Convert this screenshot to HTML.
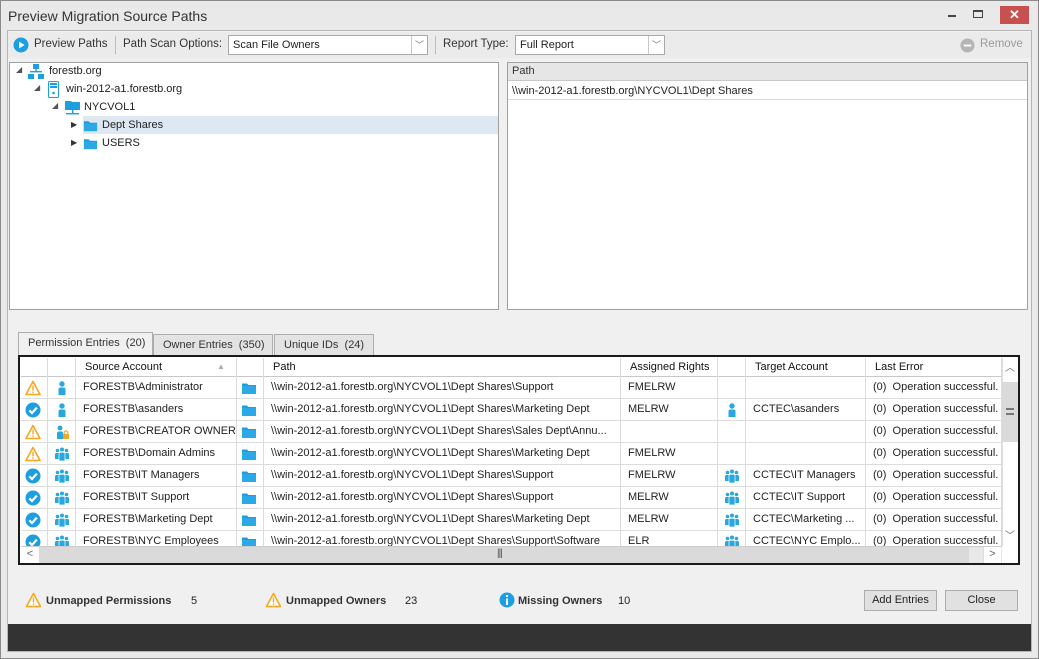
<!DOCTYPE html>
<html><head><meta charset="utf-8">
<style>
*{box-sizing:border-box;margin:0;padding:0}
body{width:1039px;height:659px;overflow:hidden;background:#fff;font-family:"Liberation Sans",sans-serif;font-size:11px;color:#222;position:relative}
.a{position:absolute}
.win{left:0;top:0;width:1039px;height:659px;border:1px solid #8a8a8a;background:#e9e9e9}
.body{left:7px;top:30px;width:1025px;height:622px;background:#f0f0f0;border:1px solid #b5b5b5}
.t{white-space:nowrap}
.combo{background:#fff;border:1px solid #a9a9a9;height:20px}
.combo .arr{position:absolute;right:0;top:0;width:16px;height:18px;border-left:1px solid #c8c8c8;color:#777;font-size:9px;text-align:center;line-height:18px}
.panel{background:#fff;border:1px solid #a0a0a0}
.tab{border:1px solid #adadad;border-bottom:none;background:#e3e3e3;height:22px;line-height:21px;padding-left:9px;color:#333;white-space:nowrap}
.grid{left:18px;top:355px;width:1002px;height:210px;border:2px solid #1a1a1a;background:#fff}
.row{position:absolute;left:0;width:981px;height:22px;border-bottom:1px solid #dcdcdc}
.c{position:absolute;top:0;height:22px;line-height:21px;border-right:1px solid #dcdcdc;white-space:nowrap;overflow:hidden;padding-left:7px}
.hd .c{height:19px;line-height:18px;padding-left:9px;color:#111}
.btn{background:#e1e1e1;border:1px solid #adadad;height:21px;line-height:19px;text-align:center;color:#222}
</style></head><body>
<svg width="0" height="0" style="position:absolute">
<defs>
<symbol id="warn" viewBox="0 0 16 16"><path d="M8 1.5L15 14.5H1Z" fill="#fff" stroke="#f5a623" stroke-width="1.6" stroke-linejoin="round"/><rect x="7.3" y="5.5" width="1.4" height="5" fill="#f5a623"/><rect x="7.3" y="11.5" width="1.4" height="1.4" fill="#f5a623"/></symbol>
<symbol id="ok" viewBox="0 0 16 16"><circle cx="8" cy="8" r="7.5" fill="#1c9ee0"/><path d="M4.3 8.3L7 11L11.8 5.6" fill="none" stroke="#fff" stroke-width="2.2"/></symbol>
<symbol id="user" viewBox="0 0 16 16"><circle cx="8" cy="4" r="2.7" fill="#29a8e0"/><path d="M4.5 15V9.5Q4.5 7.5 6.5 7.5H9.5Q11.5 7.5 11.5 9.5V15Z" fill="#29a8e0"/></symbol>
<symbol id="userlock" viewBox="0 0 16 16"><circle cx="6" cy="4" r="2.5" fill="#29a8e0"/><path d="M3 15V9.5Q3 7.5 5 7.5H8Q9 7.5 9 9V15Z" fill="#29a8e0"/><rect x="9" y="10" width="6" height="5" fill="#f5a623"/><path d="M10.2 10V8.7A1.8 1.8 0 0 1 13.8 8.7V10" fill="none" stroke="#f5a623" stroke-width="1.2"/></symbol>
<symbol id="group" viewBox="0 0 16 16"><circle cx="3.5" cy="4.5" r="1.8" fill="#29a8e0"/><circle cx="12.5" cy="4.5" r="1.8" fill="#29a8e0"/><circle cx="8" cy="3.5" r="2" fill="#29a8e0"/><path d="M1 13V8.5Q1 7 2.5 7H4.5Q5.5 7 5.5 8.5V13Z M10.5 13V8.5Q10.5 7 11.5 7H13.5Q15 7 15 8.5V13Z" fill="#29a8e0"/><path d="M5 15V8Q5 6.3 6.5 6.3H9.5Q11 6.3 11 8V15Z" fill="#29a8e0" stroke="#fff" stroke-width=".7"/></symbol>
<symbol id="folder" viewBox="0 0 16 16"><path d="M1 3.5H6L7.5 5H15V14H1Z" fill="#1c9ee0"/><rect x="1" y="6" width="14" height="8" rx="1" fill="#2aa9e6"/></symbol>
</defs></svg>

<div class="a win"></div>
<div class="a t" style="left:8px;top:8px;font-size:14px;color:#333">Preview Migration Source Paths</div>
<div class="a" style="left:948px;top:15px;width:8px;height:2px;background:#444"></div>
<div class="a" style="left:973px;top:10px;width:10px;height:8px;border:1px solid #444;border-top-width:2px"></div>
<div class="a" style="left:1000px;top:6px;width:29px;height:18px;background:#c75050;color:#fff;text-align:center;font-size:13px;font-weight:bold;line-height:18px">✕</div>

<div class="a body"></div>
<div class="a" style="left:8px;top:32px;width:1023px;height:26px;background:#ebebeb"></div>
<svg class="a" style="left:13px;top:37px" width="16" height="16" viewBox="0 0 16 16"><circle cx="8" cy="8" r="7.5" fill="#1c9ee0"/><path d="M6 4.5L11.5 8L6 11.5Z" fill="#fff"/></svg>
<div class="a t" style="left:34px;top:38px;color:#333;font-size:11.5px">Preview Paths</div>
<div class="a" style="left:115px;top:36px;width:1px;height:18px;background:#bcbcbc"></div>
<div class="a t" style="left:123px;top:38px;color:#333;font-size:11.5px">Path Scan Options:</div>
<div class="a combo" style="left:228px;top:35px;width:200px"><span class="a t" style="left:4px;top:3px">Scan File Owners</span><span class="arr">﹀</span></div>
<div class="a" style="left:435px;top:36px;width:1px;height:18px;background:#bcbcbc"></div>
<div class="a t" style="left:443px;top:38px;color:#333;font-size:11.5px">Report Type:</div>
<div class="a combo" style="left:515px;top:35px;width:150px"><span class="a t" style="left:4px;top:3px">Full Report</span><span class="arr">﹀</span></div>
<svg class="a" style="left:960px;top:38px" width="15" height="15" viewBox="0 0 16 16"><circle cx="8" cy="8" r="7.5" fill="#b5b5b5"/><rect x="4" y="7" width="8" height="2" fill="#fff"/></svg>
<div class="a t" style="left:980px;top:38px;color:#9a9a9a;font-size:11.5px">Remove</div>

<!-- tree -->
<div class="a panel" style="left:9px;top:62px;width:490px;height:248px"></div>
<div class="a" style="left:83px;top:116px;width:415px;height:18px;background:#dde8f3"></div>
<div class="a t" style="left:16px;top:65px;font-size:8px;color:#555">◢</div>
<svg class="a" style="left:28px;top:64px" width="16" height="15" viewBox="0 0 16 15"><rect x="5" y="0" width="6" height="5" fill="#1c9ee0"/><rect x="7.3" y="5" width="1.4" height="3" fill="#1c9ee0"/><rect x="2" y="7" width="12" height="1.4" fill="#1c9ee0"/><rect x="0" y="10" width="6" height="5" fill="#1c9ee0"/><rect x="10" y="10" width="6" height="5" fill="#1c9ee0"/></svg>
<div class="a t" style="left:49px;top:65px">forestb.org</div>
<div class="a t" style="left:34px;top:83px;font-size:8px;color:#555">◢</div>
<svg class="a" style="left:48px;top:81px" width="11" height="17" viewBox="0 0 11 17"><rect x=".5" y=".5" width="10" height="16" rx="1" fill="#fff" stroke="#1c9ee0"/><rect x="2" y="2" width="7" height="2" fill="#1c9ee0"/><rect x="2" y="5" width="7" height="2" fill="#1c9ee0"/><circle cx="5.5" cy="12" r="1.3" fill="#1c9ee0"/></svg>
<div class="a t" style="left:66px;top:83px">win-2012-a1.forestb.org</div>
<div class="a t" style="left:52px;top:101px;font-size:8px;color:#555">◢</div>
<svg class="a" style="left:64px;top:99px" width="17" height="16" viewBox="0 0 17 16"><path d="M1 2H7L8 3H16V11H1Z" fill="#1c9ee0"/><rect x="8" y="11" width="1.4" height="3" fill="#1c9ee0"/><rect x="2" y="14" width="13" height="1.4" fill="#1c9ee0"/></svg>
<div class="a t" style="left:84px;top:101px">NYCVOL1</div>
<div class="a t" style="left:71px;top:120px;font-size:8px;color:#333">▶</div>
<svg class="a" style="left:82px;top:118px" width="17" height="15"><use href="#folder"/></svg>
<div class="a t" style="left:102px;top:119px">Dept Shares</div>
<div class="a t" style="left:71px;top:138px;font-size:8px;color:#333">▶</div>
<svg class="a" style="left:82px;top:136px" width="17" height="15"><use href="#folder"/></svg>
<div class="a t" style="left:102px;top:137px">USERS</div>

<!-- path panel -->
<div class="a panel" style="left:507px;top:62px;width:521px;height:248px"></div>
<div class="a" style="left:508px;top:63px;width:519px;height:18px;background:#e6e6e6;border-bottom:1px solid #c8c8c8"></div>
<div class="a t" style="left:512px;top:65px;color:#333">Path</div>
<div class="a" style="left:508px;top:81px;width:519px;height:19px;border-bottom:1px solid #dcdcdc"></div>
<div class="a t" style="left:512px;top:85px">\\win-2012-a1.forestb.org\NYCVOL1\Dept Shares</div>

<!-- tabs -->
<div class="a tab" style="left:18px;top:332px;width:135px;background:#f0f0f0;height:24px;color:#333">Permission Entries&nbsp; (20)</div>
<div class="a tab" style="left:153px;top:334px;width:120px;height:21px">Owner Entries&nbsp; (350)</div>
<div class="a tab" style="left:274px;top:334px;width:100px;height:21px">Unique IDs&nbsp; (24)</div>

<div class="a grid">
<div class="a" style="left:1px;top:1px;width:981px;height:188px;overflow:hidden">
<div class="row hd" style="top:0;height:19px;border-bottom:1px solid #c8c8c8">
<div class="c" style="left:0;width:27px"></div><div class="c" style="left:27px;width:28px"></div>
<div class="c" style="left:55px;width:161px">Source Account<span style="position:absolute;left:141px;top:0;font-size:8px;color:#aaa">▲</span></div>
<div class="c" style="left:216px;width:27px"></div><div class="c" style="left:243px;width:357px">Path</div>
<div class="c" style="left:600px;width:97px">Assigned Rights</div><div class="c" style="left:697px;width:28px"></div>
<div class="c" style="left:725px;width:120px">Target Account</div><div class="c" style="left:845px;width:136px">Last Error</div>
</div>
<div id="rows"></div>
</div>
<!-- vscroll -->
<div class="a" style="left:982px;top:1px;width:16px;height:188px;background:#fff;border-left:1px solid #ddd"></div>
<div class="a t" style="left:985px;top:2px;font-size:10px;color:#666">︿</div>
<div class="a" style="left:982px;top:25px;width:16px;height:60px;background:#dadada"></div>
<div class="a" style="left:986px;top:51px;width:8px;height:7px;border-top:2px solid #777;border-bottom:2px solid #777"></div>
<div class="a t" style="left:985px;top:170px;font-size:10px;color:#666">﹀</div>
<!-- hscroll -->
<div class="a" style="left:1px;top:189px;width:981px;height:17px;background:#e8e8e8;border-top:1px solid #ccc"></div>
<div class="a" style="left:1px;top:190px;width:18px;height:16px;background:#fff;text-align:center;color:#666;line-height:15px">&lt;</div>
<div class="a" style="left:19px;top:190px;width:930px;height:16px;background:#dadada"></div>
<div class="a t" style="left:477px;top:191px;font-size:10px;color:#555;letter-spacing:-1px">|||</div>
<div class="a" style="left:963px;top:190px;width:18px;height:16px;background:#fff;text-align:center;color:#666;line-height:15px;border-left:1px solid #ddd">&gt;</div>
</div>

<!-- footer -->
<svg class="a" style="left:25px;top:592px" width="17" height="16"><use href="#warn"/></svg>
<div class="a t" style="left:46px;top:595px;font-weight:bold;font-size:11px;color:#333">Unmapped Permissions</div>
<div class="a t" style="left:191px;top:595px">5</div>
<svg class="a" style="left:265px;top:592px" width="17" height="16"><use href="#warn"/></svg>
<div class="a t" style="left:286px;top:595px;font-weight:bold;font-size:11px;color:#333">Unmapped Owners</div>
<div class="a t" style="left:405px;top:595px">23</div>
<svg class="a" style="left:499px;top:592px" width="16" height="16" viewBox="0 0 16 16"><circle cx="8" cy="8" r="7.5" fill="#1c9ee0"/><rect x="7" y="3" width="2" height="2" fill="#fff"/><rect x="7" y="6.5" width="2" height="6.5" fill="#fff"/></svg>
<div class="a t" style="left:518px;top:595px;font-weight:bold;font-size:11px;color:#333">Missing Owners</div>
<div class="a t" style="left:618px;top:595px">10</div>
<div class="a btn" style="left:864px;top:590px;width:73px">Add Entries</div>
<div class="a btn" style="left:945px;top:590px;width:73px">Close</div>
<div class="a" style="left:8px;top:624px;width:1023px;height:27px;background:#333"></div>

<script>
var d=[["warn","user","FORESTB\\Administrator","Support","FMELRW","","",""],
["ok","user","FORESTB\\asanders","Marketing Dept","MELRW","user","CCTEC\\asanders"],
["warn","userlock","FORESTB\\CREATOR OWNER","Sales Dept\\Annu...","","",""],
["warn","group","FORESTB\\Domain Admins","Marketing Dept","FMELRW","",""],
["ok","group","FORESTB\\IT Managers","Support","FMELRW","group","CCTEC\\IT Managers"],
["ok","group","FORESTB\\IT Support","Support","MELRW","group","CCTEC\\IT Support"],
["ok","group","FORESTB\\Marketing Dept","Marketing Dept","MELRW","group","CCTEC\\Marketing ..."],
["ok","group","FORESTB\\NYC Employees","Support\\Software","ELR","group","CCTEC\\NYC Emplo..."]];
var h="";
d.forEach(function(r,i){
 var ic=function(n,x){return n?'<svg style="position:absolute;left:'+x+'px;top:3px" width="16" height="16"><use href="#'+n+'"/></svg>':""};
 h+='<div class="row" style="top:'+(19+22*i)+'px">'+
 '<div class="c" style="left:0;width:27px">'+ic(r[0],4)+'</div>'+
 '<div class="c" style="left:27px;width:28px">'+ic(r[1],6)+'</div>'+
 '<div class="c" style="left:55px;width:161px">'+r[2]+'</div>'+
 '<div class="c" style="left:216px;width:27px">'+ic("folder",4)+'</div>'+
 '<div class="c" style="left:243px;width:357px">\\\\win-2012-a1.forestb.org\\NYCVOL1\\Dept Shares\\'+r[3]+'</div>'+
 '<div class="c" style="left:600px;width:97px">'+r[4]+'</div>'+
 '<div class="c" style="left:697px;width:28px">'+ic(r[5],6)+'</div>'+
 '<div class="c" style="left:725px;width:120px">'+r[6]+'</div>'+
 '<div class="c" style="left:845px;width:136px">(0)&nbsp; Operation successful.</div></div>';
});
document.getElementById("rows").innerHTML=h;
</script>
</body></html>
